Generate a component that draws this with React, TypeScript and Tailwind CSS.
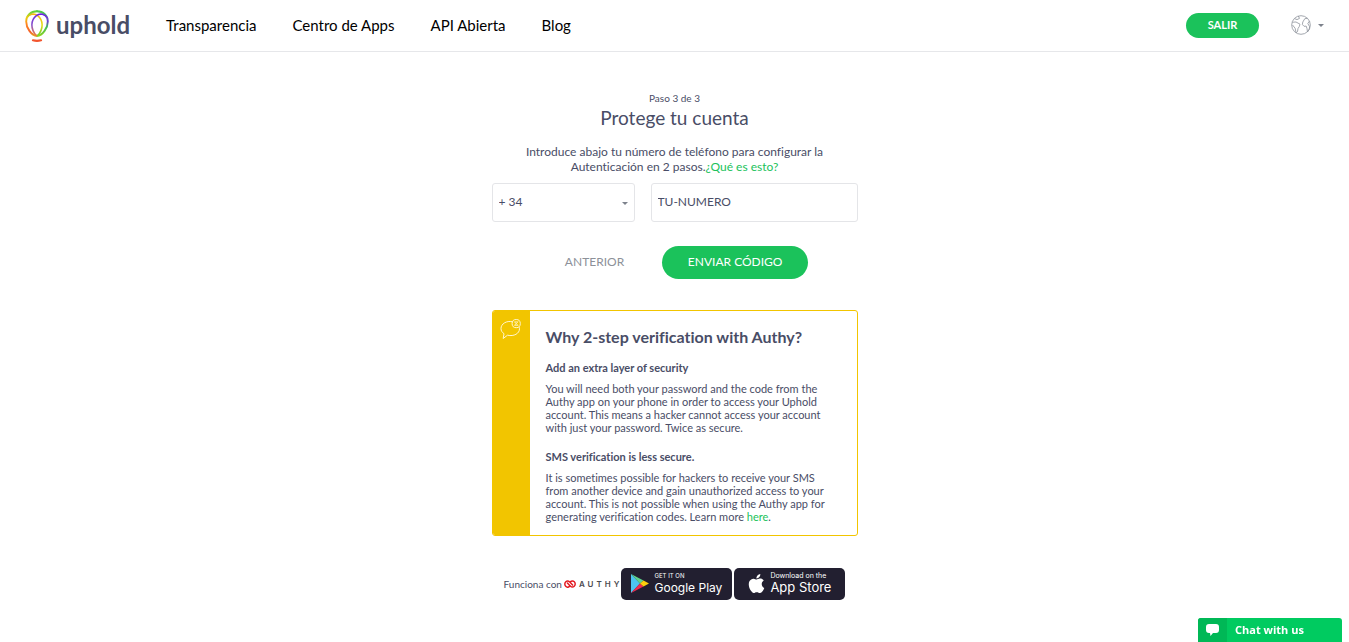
import type { ReactNode } from "react";

function Caret({ className = "" }: { className?: string }) {
  return (
    <svg viewBox="0 0 6 3" className={`h-[3px] w-[6px] fill-[#7d828c] ${className}`} aria-hidden="true">
      <path d="M0 0h6L3 3z" />
    </svg>
  );
}

function UpholdMark() {
  return (
    <svg viewBox="0 0 24 32" className="h-8 w-6" fill="none" strokeLinecap="round" aria-hidden="true">
      <defs>
        <linearGradient id="outerLeft" x1="0" y1="0" x2="0" y2="1">
          <stop offset="0" stopColor="#5fd33a" />
          <stop offset="0.25" stopColor="#e8d010" />
          <stop offset="0.5" stopColor="#ff8a1e" />
          <stop offset="0.85" stopColor="#f5622c" />
          <stop offset="1" stopColor="#e8a020" />
        </linearGradient>
        <linearGradient id="outerRight" x1="0" y1="0" x2="0" y2="1">
          <stop offset="0" stopColor="#4fce46" />
          <stop offset="0.22" stopColor="#4a9f80" />
          <stop offset="0.4" stopColor="#6a35d8" />
          <stop offset="0.65" stopColor="#3fbf55" />
          <stop offset="1" stopColor="#8bd420" />
        </linearGradient>
        <linearGradient id="innerLeft" x1="0" y1="0" x2="0" y2="1">
          <stop offset="0" stopColor="#f6b414" />
          <stop offset="0.5" stopColor="#e5df1c" />
          <stop offset="1" stopColor="#6ccb2c" />
        </linearGradient>
        <linearGradient id="innerRight" x1="0" y1="0" x2="0" y2="1">
          <stop offset="0" stopColor="#6a22e0" />
          <stop offset="0.5" stopColor="#8a55cc" />
          <stop offset="1" stopColor="#f2793a" />
        </linearGradient>
      </defs>
      <path d="M1.600 8.200C4 3.800 9 3 12.600 5.600c6 4.600 6 13.400.2 20" stroke="url(#innerLeft)" strokeWidth="1.600" />
      <path d="M12 1.200C5.600 1.200 1.200 5.600 1.200 11.400c0 6.200 5 14.300 10.800 14.300" stroke="url(#outerLeft)" strokeWidth="1.900" />
      <path d="M12 1.200c6.400 0 10.800 4.400 10.800 10.200 0 6.200-5 14.300-10.800 14.300" stroke="url(#outerRight)" strokeWidth="1.900" />
      <path d="M22.400 8.200C20 3.800 15 3 11.400 5.600c-6 4.600-6 13.400-.2 20" stroke="url(#innerRight)" strokeWidth="1.600" />
      <path d="M8 30.300c2.400.6 5.600.6 8 0" stroke="#f2542d" strokeWidth="2.200" />
    </svg>
  );
}

function Globe() {
  return (
    <svg viewBox="0 0 20 20" className="size-5" fill="none" stroke="#8d929b" strokeWidth="0.8" strokeLinejoin="round" aria-hidden="true">
      <circle cx="10" cy="10" r="9.300" />
      <path d="M1.300 7.200 5 7l4 2.200-.7 2.300-1.300 2-.5 3.200-1.400 1-1-4.500L1.500 10" />
      <path d="M3.500 3.600 6 4.600l2.500-1.200L7.300 1" />
      <path d="m16.500 3.300-2.700.4-2 3.300-.4 2.500 1.600 1.800 2.200-.2.800 2.500.5 3.400 1.700-2.600.4-2.700-1.800-3.200L18.500 6" />
    </svg>
  );
}

function ChatNotice() {
  return (
    <svg viewBox="0 0 22 22" className="h-[22px] w-[22px]" fill="none" stroke="#fff6cf" strokeWidth="1" strokeLinejoin="round" aria-hidden="true">
      <path d="M12.500 3.800C6.500 2.300 1 5.900 1 10.500c0 2.300 1.200 4 3 5.200L3.200 20.500l4.300-3.300C14 18.700 19.500 15.500 19.500 10.700c0-.6 0-1-.2-1.500" />
      <circle cx="16.200" cy="5.600" r="4.100" />
      <path d="m14.300 3.700 3.800 3.800m0-3.800-3.800 3.800M14.500 3.900h3.400M14.500 7.300h3.400" strokeWidth="0.800" />
    </svg>
  );
}

function AuthyLogo() {
  return (
    <span className="flex items-center gap-[3px]">
      <svg viewBox="0 0 12 8" className="h-2 w-3" fill="none" stroke="#e31b23" strokeWidth="1.500" strokeLinecap="round" aria-hidden="true">
        <path d="M3.400 3 6.200 5.900c1.200 1.200 2.900 1.400 4 .4 1.300-1.200 1.300-3.400.1-4.600C9.200.6 7.500.7 6.400 1.800" />
        <path d="M8.600 5 5.800 2.100C4.600.9 2.900.7 1.800 1.700.5 2.900.5 5.100 1.700 6.300c1.100 1.100 2.800 1 3.900-.1" />
      </svg>
      <span className="-mr-[3px] font-['Inter',sans-serif] text-[8px] leading-3 font-semibold tracking-[3px] text-[#4a4a4f]">AUTHY</span>
    </span>
  );
}

function StoreBadge({ icon, children }: { icon: ReactNode; children: ReactNode }) {
  return (
    <a href="#" className="flex h-8 w-[111px] items-center justify-center gap-[5px] rounded-[5px] bg-[#221f30] pb-0.5 font-['Inter',sans-serif] whitespace-nowrap text-white">
      {icon}
      <span className="flex flex-col">{children}</span>
    </a>
  );
}

const navLinks = ["Transparencia", "Centro de Apps", "API Abierta", "Blog"];

export default function App() {
  return (
    <div className="flex min-h-screen flex-col bg-white font-['Lato',sans-serif] text-[#494d66] [font-variant-ligatures:none]">
      <header className="flex h-[52px] items-center border-b border-[#e6e7ea] px-[25px] pb-px">
        <a href="#" className="flex items-center gap-[7px] pt-0.5">
          <UpholdMark />
          <span className="pb-0.5 text-2xl leading-7 font-bold">uphold</span>
        </a>
        <nav className="ml-9 flex gap-9 text-[15px] leading-5 text-black">
          {navLinks.map((label) => (
            <a key={label} href="#">{label}</a>
          ))}
        </nav>
        <button type="button" className="ml-auto h-[25px] w-[73px] rounded-full bg-[#1bc25b] text-[11px] font-bold text-white">
          SALIR
        </button>
        <button type="button" aria-label="Idioma" className="ml-8 flex items-center gap-[7px]">
          <Globe />
          <Caret />
        </button>
      </header>

      <main className="mx-auto flex w-full max-w-[366px] flex-col pt-10">
        <p className="text-center text-[10px] leading-3">Paso 3 de 3</p>
        <h1 className="mt-0.5 text-center text-[19px] leading-6">Protege tu cuenta</h1>
        <p className="mt-3.5 text-center text-[12px] leading-[15px]">
          Introduce abajo tu número de teléfono para configurar la
          <br />
          Autenticación en 2 pasos.
          <a href="#" className="text-[#1bc25b]">¿Qué es esto?</a>
        </p>

        <form onSubmit={(event) => event.preventDefault()}>
          <div className="mt-[9px] flex gap-4">
            <div className="relative w-[143px]">
              <select aria-label="Prefijo" className="h-[39px] w-full appearance-none rounded-[3px] border border-[#e4e5e8] bg-white px-1.5 pb-0.5 text-[12px]">
                <option>+ 34</option>
              </select>
              <Caret className="absolute top-[19px] right-[7px]" />
            </div>
            <input
              type="text"
              aria-label="Número de teléfono"
              defaultValue="TU-NUMERO"
              className="h-[39px] min-w-0 flex-1 rounded-[3px] border border-[#e4e5e8] px-1.5 pb-0.5 text-[12px]"
            />
          </div>
          <div className="mt-6 flex justify-center gap-3.5 text-[12px]">
            <button type="button" className="h-[33px] px-6 pb-0.5 text-[#8d9199]">ANTERIOR</button>
            <button type="submit" className="h-[33px] w-[146px] rounded-full bg-[#1bc25b] pb-0.5 text-white">ENVIAR CÓDIGO</button>
          </div>
        </form>

        <section className="mt-[31px] flex overflow-hidden rounded-[3px] border border-[#f2c500]">
          <div className="flex w-[37px] shrink-0 justify-center bg-[#f2c500] pt-[7px]">
            <ChatNotice />
          </div>
          <div className="px-4 pt-4 pb-3 text-[11px] leading-[13px] whitespace-nowrap">
            <h2 className="text-[16px] leading-5 font-bold">Why 2-step verification with Authy?</h2>
            <h3 className="mt-3.5 font-bold">Add an extra layer of security</h3>
            <p className="mt-2">
              You will need both your password and the code from the<br />
              Authy app on your phone in order to access your Uphold<br />
              account. This means a hacker cannot access your account<br />
              with just your password. Twice as secure.
            </p>
            <h3 className="mt-4 font-bold">SMS verification is less secure.</h3>
            <p className="mt-2">
              It is sometimes possible for hackers to receive your SMS<br />
              from another device and gain unauthorized access to your<br />
              account. This is not possible when using the Authy app for<br />
              generating verification codes. Learn more <a href="#" className="text-[#1bc25b]">here</a>.
            </p>
          </div>
        </section>

        <footer className="mt-8 flex items-center justify-center gap-0.5">
          <span className="text-[10px] leading-3 whitespace-nowrap">Funciona con</span>
          <AuthyLogo />
          <StoreBadge
            icon={
              <svg viewBox="0 0 18 19" className="h-[19px] w-[18px]" aria-hidden="true">
                <path d="M0 0v19l9-9.500z" fill="#4cc3f0" />
                <path d="M0 0 12.500 6.400 9 9.500z" fill="#5fd38d" />
                <path d="M0 19 12.500 12.600 9 9.500z" fill="#ee2b50" />
                <path d="M12.500 6.400 18 9.500l-5.500 3.100L9 9.500z" fill="#fdd00d" />
              </svg>
            }
          >
            <span className="text-[6px] leading-2">GET IT ON</span>
            <span className="text-[12px] leading-[15px]">Google Play</span>
          </StoreBadge>
          <StoreBadge
            icon={
              <svg viewBox="2 0 20 24" className="h-[19px] w-[17px] fill-white" aria-hidden="true">
                <path d="M12.152 6.896c-.948 0-2.415-1.078-3.960-1.040-2.040.027-3.910 1.183-4.961 3.014-2.117 3.675-.546 9.103 1.519 12.090 1.013 1.454 2.208 3.090 3.792 3.039 1.520-.065 2.090-.987 3.935-.987 1.831 0 2.350.987 3.960.948 1.637-.026 2.676-1.480 3.676-2.948 1.156-1.688 1.636-3.325 1.662-3.415-.039-.013-3.182-1.221-3.220-4.857-.026-3.040 2.480-4.494 2.597-4.559-1.429-2.090-3.623-2.324-4.390-2.376-2-.156-3.675 1.090-4.610 1.090zM15.530 3.830c.843-1.012 1.400-2.427 1.245-3.830-1.207.052-2.662.805-3.532 1.818-.780.896-1.454 2.338-1.273 3.714 1.338.104 2.715-.688 3.559-1.701" />
              </svg>
            }
          >
            <span className="text-[7px] leading-2">Download on the</span>
            <span className="text-[13px] leading-[15px]">App Store</span>
          </StoreBadge>
        </footer>
      </main>

      <button type="button" className="fixed right-[7px] bottom-0 flex h-6 w-36 items-stretch overflow-hidden rounded-t-[3px] bg-[#00cb60] font-['Open_Sans',sans-serif] text-[11px] font-bold text-white">
        <span className="flex w-[29px] items-center justify-center bg-[#00b856]">
          <svg viewBox="0 0 13 12" className="h-3 w-[13px] fill-white" aria-hidden="true">
            <path d="M3 0h7q3 0 3 3v3q0 3-3 3H7L4.500 12 4 9H3Q0 9 0 6V3q0-3 3-3z" />
          </svg>
        </span>
        <span className="flex items-center pl-2">Chat with us</span>
      </button>
    </div>
  );
}
